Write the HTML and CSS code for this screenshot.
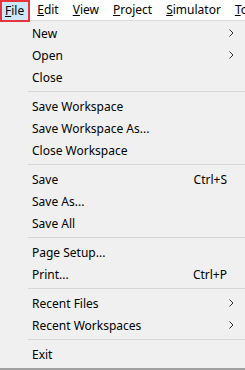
FILE: index.html
```html
<!DOCTYPE html>
<html lang="en">
<head>
  <meta charset="UTF-8" />
  <title>File menu</title>
  <link rel="stylesheet" href="styles.css">
</head>
<body>
  <div class="menubar">
    <span class="top active"><u>F</u>ile</span>
    <span class="top"><u>E</u>dit</span>
    <span class="top"><u>V</u>iew</span>
    <span class="top"><u>P</u>roject</span>
    <span class="top"><u>S</u>imulator</span>
    <span class="top"><u>T</u>ools</span>
  </div>

  <div class="menu">
    <div class="item">New <svg class="arrow" width="5" height="8" viewBox="0 0 5 8"><path d="M0.5 0.5 L4 4 L0.5 7.5" fill="none" stroke="#333" stroke-width="1"/></svg></div>
    <div class="item">Open <svg class="arrow" width="5" height="8" viewBox="0 0 5 8"><path d="M0.5 0.5 L4 4 L0.5 7.5" fill="none" stroke="#333" stroke-width="1"/></svg></div>
    <div class="item">Close</div>
    <div class="sep"></div>
    <div class="item">Save Workspace</div>
    <div class="item">Save Workspace As...</div>
    <div class="item">Close Workspace</div>
    <div class="sep"></div>
    <div class="item">Save <span class="key">Ctrl+S</span></div>
    <div class="item">Save As...</div>
    <div class="item">Save All</div>
    <div class="sep"></div>
    <div class="item">Page Setup...</div>
    <div class="item">Print... <span class="key">Ctrl+P</span></div>
    <div class="sep"></div>
    <div class="item">Recent Files <svg class="arrow" width="5" height="8" viewBox="0 0 5 8"><path d="M0.5 0.5 L4 4 L0.5 7.5" fill="none" stroke="#333" stroke-width="1"/></svg></div>
    <div class="item">Recent Workspaces <svg class="arrow" width="5" height="8" viewBox="0 0 5 8"><path d="M0.5 0.5 L4 4 L0.5 7.5" fill="none" stroke="#333" stroke-width="1"/></svg></div>
    <div class="sep"></div>
    <div class="item">Exit</div>
  </div>
</body>
</html>
```

FILE: styles.css
```css
* { margin: 0; padding: 0; box-sizing: border-box; }
body {
  font-family: "Noto Sans", "Liberation Sans", sans-serif;
  font-size: 12px;
  color: #000;
  background: #fff;
  width: 245px;
  height: 370px;
  overflow: hidden;
}
.menubar {
  display: flex;
  height: 20px;
  background: #fff;
  white-space: nowrap;
}
.top {
  padding: 0 7px;
  line-height: 20px;
  flex: none;
}
.top.active {
  background: #cce8ff;
  border: 2px solid #e8333a;
  padding: 0 4px 0 3px;
  height: 22px;
  line-height: 18px;
  position: relative;
  z-index: 1;
}
.menu {
  border-top: 1px solid #dadada;
  border-bottom: 2px solid #a0a0a0;
  background: #f0f0f0;
  padding: 1px 0 3px;
}
.item {
  display: flex;
  align-items: center;
  height: 22px;
  padding: 0 11px 0 32px;
}
.key { margin-left: auto; padding-right: 7px; }
.arrow { margin-left: auto; }
.sep {
  height: 1px;
  margin: 3px 0 3px 28px;
  background: #d7d7d7;
}
```
